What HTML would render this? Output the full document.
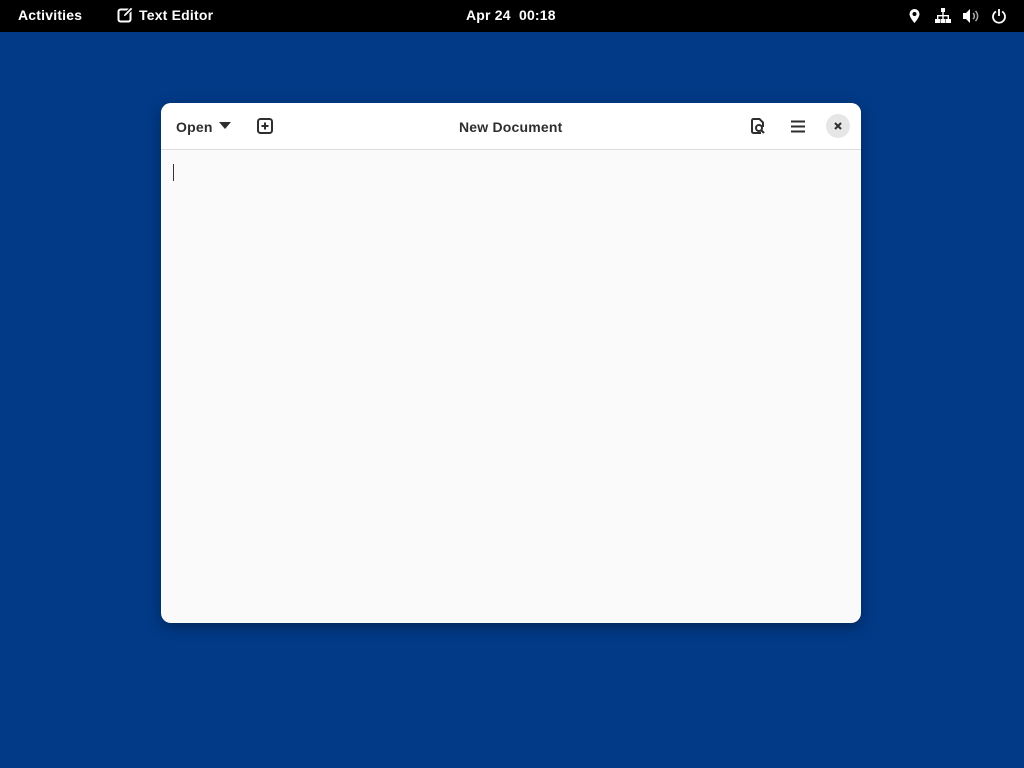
<!DOCTYPE html>
<html><head><style>
body{margin:0;width:1024px;height:768px;background:#023a87;font-family:"Liberation Sans",sans-serif;position:relative;overflow:hidden}
.bar{position:absolute;left:0;top:0;width:1024px;height:32px;background:#000;color:#fff;font-size:14px;font-weight:bold;letter-spacing:0.2px}
.bar span{position:absolute;top:7px}
.win{position:absolute;left:161px;top:103px;width:700px;height:520px;background:#fafafa;border-radius:10px;box-shadow:0 4px 14px rgba(0,0,0,.35);overflow:hidden}
.hdr{height:46px;background:#fff;border-bottom:1px solid #dcdcdc;position:relative;color:#2e2e2e;font-size:14px;font-weight:bold;letter-spacing:0.2px}
.hdr span{position:absolute;top:16px}
svg{position:absolute}
</style></head><body>
<div class="bar">
<span style="left:18px">Activities</span>
<svg style="left:117px;top:7px" width="16" height="16" viewBox="0 0 16 16"><rect x="1.5" y="2.5" width="12" height="12" rx="2" fill="none" stroke="#fff" stroke-width="2"/><path d="M6 10l1-3 7-7 2 2-7 7z" fill="#fff" stroke="#000" stroke-width="1"/></svg>
<span style="left:139px">Text Editor</span>
<span style="left:466px">Apr 24&nbsp; 00:18</span>
<svg style="left:908px;top:8px" width="13" height="16" viewBox="0 0 13 16"><path d="M6.5 1a5 5 0 0 0-5 5c0 3.5 5 9 5 9s5-5.5 5-9a5 5 0 0 0-5-5z" fill="#fff"/><circle cx="6.5" cy="6" r="2" fill="#000"/></svg>
<svg style="left:935px;top:8px" width="16" height="16" viewBox="0 0 16 16" fill="#fff"><rect x="6" y="0" width="4" height="4"/><rect x="7.3" y="4" width="1.4" height="3"/><rect x="2" y="7" width="12" height="1.4"/><rect x="2" y="7" width="1.4" height="4"/><rect x="12.6" y="7" width="1.4" height="4"/><rect x="7.3" y="7" width="1.4" height="4"/><rect x="0" y="11" width="5" height="4"/><rect x="5.5" y="11" width="5" height="4"/><rect x="11" y="11" width="5" height="4"/></svg>
<svg style="left:962px;top:8px" width="18" height="16" viewBox="0 0 18 16"><path d="M1 5h3l4-4v14l-4-4H1z" fill="#fff"/><path d="M11 5a4 4 0 0 1 0 6M13.5 3a7 7 0 0 1 0 10" stroke="#aaa" stroke-width="1.5" fill="none"/></svg>
<svg style="left:991px;top:8px" width="16" height="16" viewBox="0 0 16 16"><path d="M5 3.5a6 6 0 1 0 6 0" stroke="#fff" stroke-width="1.8" fill="none"/><path d="M8 1v7" stroke="#fff" stroke-width="1.8"/></svg>
</div>
<div class="win">
<div class="hdr">
<span style="left:15px">Open</span>
<svg style="left:58px;top:19px" width="12" height="7"><path d="M0 0h12L6 7z" fill="#2e2e2e"/></svg>
<svg style="left:96px;top:15px" width="16" height="16" viewBox="0 0 16 16"><rect x="1" y="1" width="14" height="14" rx="2.5" fill="none" stroke="#2e2e2e" stroke-width="2"/><path d="M8 4.5v7M4.5 8h7" stroke="#2e2e2e" stroke-width="2"/></svg>
<span style="left:298px">New Document</span>
<svg style="left:589px;top:15px" width="16" height="17" viewBox="0 0 16 17"><path d="M11 15H3.5a1.5 1.5 0 0 1-1.5-1.5v-11A1.5 1.5 0 0 1 3.5 1h6L13 4.5V9" fill="none" stroke="#2e2e2e" stroke-width="2"/><circle cx="9" cy="10" r="3" fill="none" stroke="#2e2e2e" stroke-width="2"/><path d="M11 12l3 3" stroke="#2e2e2e" stroke-width="2.2"/></svg>
<svg style="left:629px;top:17px" width="16" height="13"><path d="M1 1.5h14M1 6.5h14M1 11.5h14" stroke="#2e2e2e" stroke-width="2"/></svg>
<div style="position:absolute;left:665px;top:11px;width:24px;height:24px;border-radius:12px;background:#e6e6e6"></div>
<svg style="left:673px;top:19px" width="8" height="8"><path d="M1 1l6 6M7 1l-6 6" stroke="#2e2e2e" stroke-width="2"/></svg>
</div>
<div style="position:absolute;left:12px;top:61px;width:1px;height:17px;background:#333"></div>
</div>
</body></html>
